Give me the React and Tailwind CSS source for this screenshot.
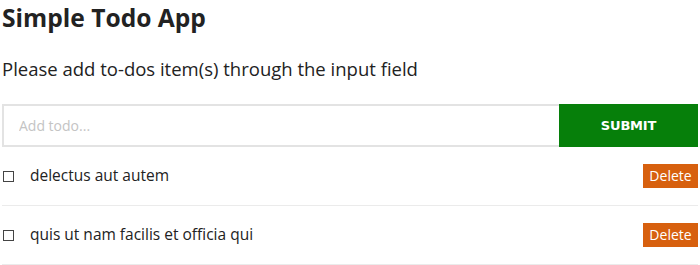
import React, { useState } from "react";

const initialTodos = [
    { id: 1, title: "delectus aut autem", completed: false },
    { id: 2, title: "quis ut nam facilis et officia qui", completed: false },
];

const App = () => {
    const [todos, setTodos] = useState(initialTodos);
    const [text, setText] = useState("");

    const addTodo = (e) => {
        e.preventDefault();
        if (!text.trim()) return;
        setTodos([...todos, { id: Date.now(), title: text, completed: false }]);
        setText("");
    };

    const toggle = (id) => {
        setTodos(todos.map((t) => (t.id === id ? { ...t, completed: !t.completed } : t)));
    };

    const remove = (id) => {
        setTodos(todos.filter((t) => t.id !== id));
    };

    return (
        <div className="px-[2px] text-[#222] font-['Open_Sans','Noto_Sans',sans-serif]">
            <h1 className="text-[24.6px] leading-[32px] font-bold pt-[2px]">Simple Todo App</h1>
            <p className="text-[18.5px] leading-[26px] mt-[22px]">
                Please add to-dos item(s) through the input field
            </p>
            <form onSubmit={addTodo} className="flex mt-[22px] h-[43px]">
                <input
                    type="text"
                    value={text}
                    onChange={(e) => setText(e.target.value)}
                    placeholder="Add todo..."
                    className="flex-1 border-2 border-[#e3e3e3] border-r-0 px-[15px] text-[14px] placeholder:text-[#c4c4c4] outline-none"
                />
                <button
                    type="submit"
                    className="w-[139px] bg-[#067f0a] text-white text-[13px] font-bold font-['DejaVu_Sans',Verdana,sans-serif] tracking-[-0.2px]"
                >
                    SUBMIT
                </button>
            </form>
            <ul>
                {todos.map((todo) => (
                    <li
                        key={todo.id}
                        className="flex items-center h-[59px] border-b border-[#ebebeb]"
                    >
                        <input
                            type="checkbox"
                            checked={todo.completed}
                            onChange={() => toggle(todo.id)}
                            className="appearance-none w-[11px] h-[11px] ml-[1px] border border-[#444] bg-white"
                        />
                        <span className={"ml-[16px] text-[15.5px] " + (todo.completed ? "line-through" : "")}>
                            {todo.title}
                        </span>
                        <button
                            onClick={() => remove(todo.id)}
                            className="ml-auto w-[55px] h-[24px] bg-[#d7600e] text-white text-[14px] leading-none"
                        >
                            Delete
                        </button>
                    </li>
                ))}
            </ul>
        </div>
    );
};

export default App;
